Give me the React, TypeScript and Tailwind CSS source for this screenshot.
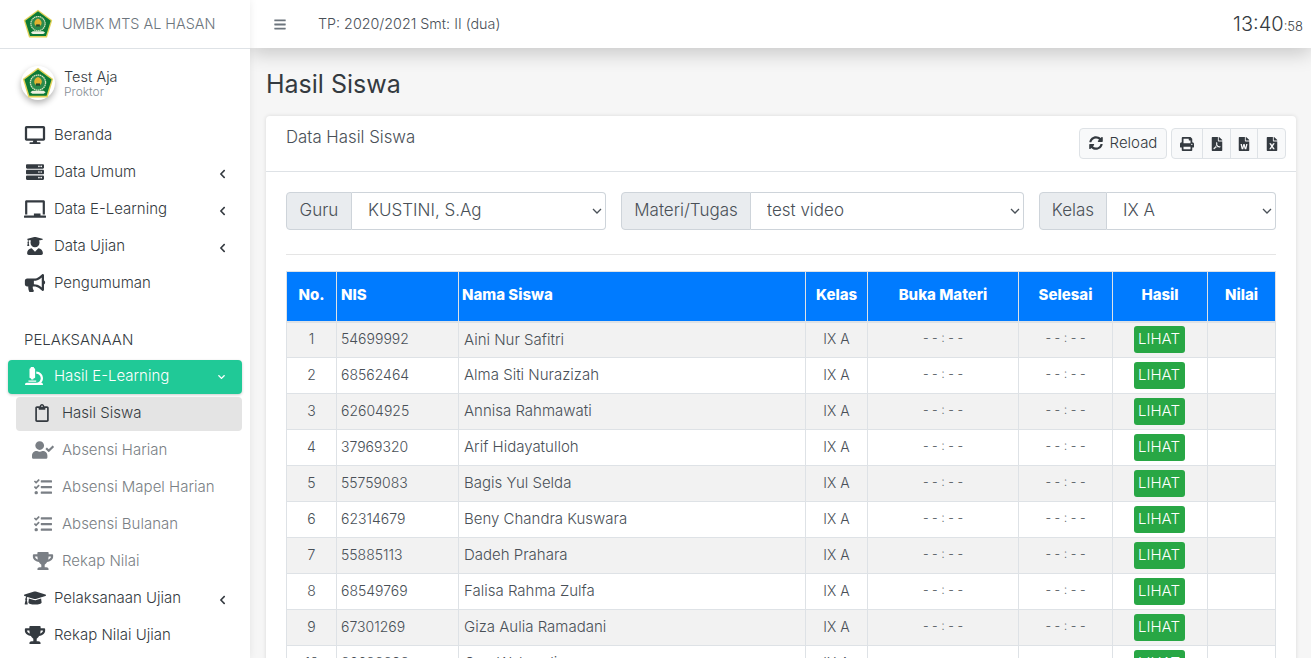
import React from "react"
import {
  FaBars, FaBullhorn, FaChalkboard, FaChevronDown, FaChevronLeft, FaDesktop, FaFileExcel, FaFilePdf,
  FaFileWord, FaGraduationCap, FaMicroscope, FaPrint, FaRegClipboard, FaServer, FaSyncAlt, FaTasks,
  FaTrophy, FaUserCheck, FaUserGraduate,
} from "react-icons/fa"

const students = [
  ["1", "54699992", "Aini Nur Safitri"],
  ["2", "68562464", "Alma Siti Nurazizah"],
  ["3", "62604925", "Annisa Rahmawati"],
  ["4", "37969320", "Arif Hidayatulloh"],
  ["5", "55759083", "Bagis Yul Selda"],
  ["6", "62314679", "Beny Chandra Kuswara"],
  ["7", "55885113", "Dadeh Prahara"],
  ["8", "68549769", "Falisa Rahma Zulfa"],
  ["9", "67301269", "Giza Aulia Ramadani"],
  ["10", "36628893", "Gun Wahyudi"],
]

function Logo({ className }: { className?: string }) {
  return (
    <svg viewBox="0 0 40 40" className={className}>
      <path d="M20 1 39 15 32 38H8L1 15Z" fill="#e3d35a" />
      <path d="M20 3 37 15.700 30.700 36H9.300L3 15.700Z" fill="#0c7a36" />
      <circle cx="20" cy="19.500" r="9.500" fill="#2c8a4c" stroke="#d5e3c0" strokeWidth="1.600" strokeDasharray="2 0.600" />
      <path d="M20 12.500c2.800 1 4.800 3.200 4.800 6 0 2.800-2.200 4.800-4.800 4.800s-4.800-2-4.800-4.800c0-2.800 2-5 4.800-6Z" fill="#e2b22f" />
      <path d="M17.500 20.500h5v3h-5Z" fill="#1d4a2c" />
      <path d="M10.500 31.500 13 29.600h14l2.500 1.900-2.500 1.900H13Z" fill="#eef0df" />
    </svg>
  )
}

function NavItem({ icon: Icon, label, caret }: { icon: any; label: string; caret?: boolean }) {
  return (
    <div className="flex h-[37px] items-center pl-6 pr-[24px] text-[#343a40]">
      <span className="flex w-[30px] -translate-y-px justify-start">
        <Icon className="h-[18px] w-[22px]" />
      </span>
      <span className="flex-1">{label}</span>
      {caret && <FaChevronLeft className="mt-[2px] h-[10px] w-[7px]" />}
    </div>
  )
}

function SubItem({ icon: Icon, label }: { icon: any; label: string }) {
  return (
    <div className="ml-4 flex h-[37px] w-[226px] items-center pl-4 text-[#7a7f85]">
      <span className="flex w-[30px] -translate-y-px justify-start">
        <Icon className="h-[18px] w-[22px]" />
      </span>
      <span>{label}</span>
    </div>
  )
}

function Sidebar() {
  return (
    <aside className="z-20 flex w-[250px] shrink-0 flex-col bg-white shadow-[0_0_8px_rgba(0,0,0,0.08)]">
      <div className="flex h-[49px] items-center border-b border-[#dee2e6] pl-[23px]">
        <Logo className="h-[30px] w-[30px]" />
        <span className="ml-[9px] text-[14.4px] text-[#6c757d]">UMBK MTS AL HASAN</span>
      </div>
      <div className="flex h-[68px] items-center pl-[21px]">
        <div className="flex h-[34px] w-[34px] items-center justify-center rounded-full bg-white shadow-[0_3px_6px_rgba(0,0,0,0.3)]">
          <Logo className="h-[32px] w-[32px]" />
        </div>
        <div className="ml-[9px] flex flex-col">
          <span className="pb-[1px] text-[14.500px] leading-[17px] text-[#343a40]">Test Aja</span>
          <span className="text-[12px] leading-[12px] text-[#868e96]">Proktor</span>
        </div>
      </div>
      <NavItem icon={FaDesktop} label="Beranda" />
      <NavItem icon={FaServer} label="Data Umum" caret />
      <NavItem icon={FaChalkboard} label="Data E-Learning" caret />
      <NavItem icon={FaUserGraduate} label="Data Ujian" caret />
      <NavItem icon={FaBullhorn} label="Pengumuman" />
      <div className="flex h-[58px] items-end pb-[9px] pl-6 text-[#343a40]">PELAKSANAAN</div>
      <div className="mx-2 flex h-[34px] items-center rounded bg-[#20c997] pl-4 pr-[15px] text-white shadow-[0_1px_3px_rgba(0,0,0,0.2)]">
        <span className="flex w-[30px] -translate-y-px justify-start">
          <FaMicroscope className="h-[18px] w-[20px]" />
        </span>
        <span className="flex-1 pb-[2px]">Hasil E-Learning</span>
        <FaChevronDown className="h-[8px] w-[11px]" />
      </div>
      <div className="ml-4 mt-[3px] flex h-[34px] w-[226px] items-center rounded bg-[#e4e4e4] pl-4 text-[#343a40]">
        <span className="flex w-[30px] -translate-y-px justify-start pl-[2px]">
          <FaRegClipboard className="h-[18px] w-[16px]" />
        </span>
        <span className="pb-[2px]">Hasil Siswa</span>
      </div>
      <div className="h-[1px]" />
      <SubItem icon={FaUserCheck} label="Absensi Harian" />
      <SubItem icon={FaTasks} label="Absensi Mapel Harian" />
      <SubItem icon={FaTasks} label="Absensi Bulanan" />
      <SubItem icon={FaTrophy} label="Rekap Nilai" />
      <NavItem icon={FaGraduationCap} label="Pelaksanaan Ujian" caret />
      <NavItem icon={FaTrophy} label="Rekap Nilai Ujian" />
    </aside>
  )
}

function SelectGroup({ label, value, width, labelWidth }: { label: string; value: string; width: string; labelWidth: string }) {
  return (
    <div className={`flex h-[38px] ${width}`}>
      <span className={`flex ${labelWidth} shrink-0 items-center justify-center rounded-l border border-[#ced4da] bg-[#e9ecef] pb-px text-[#495057]`}>
        {label}
      </span>
      <div className="relative min-w-0 flex-1">
        <select
          defaultValue={value}
          className="h-full w-full appearance-none rounded-r border border-l-0 border-[#ced4da] bg-white pb-px pl-4 text-[#495057]"
        >
          <option>{value}</option>
        </select>
        <svg viewBox="0 0 10 6" className="pointer-events-none absolute right-[4px] top-[16px] h-[6px] w-[10px]">
          <path d="M1 1l4 4 4-4" fill="none" stroke="#495057" strokeWidth="1.300" />
        </svg>
      </div>
    </div>
  )
}

function Results() {
  const th = "border border-b-2 border-[#dee2e6] pb-[2px] text-[15px] font-extrabold text-white"
  const td = "border border-[#dee2e6] px-[4px]"
  return (
    <table className="w-[989px] table-fixed border-collapse text-[14px] text-[#495057]">
      <colgroup>
        <col className="w-[50px]" />
        <col className="w-[122px]" />
        <col className="w-[347px]" />
        <col className="w-[62px]" />
        <col className="w-[151px]" />
        <col className="w-[94px]" />
        <col className="w-[95px]" />
        <col className="w-[68px]" />
      </colgroup>
      <thead>
        <tr className="h-[50px] bg-[#007bff]">
          <th className={th}>No.</th>
          <th className={`${th} px-[4px] text-left`}>NIS</th>
          <th className={`${th} pl-[3px] text-left`}>Nama Siswa</th>
          <th className={th}>Kelas</th>
          <th className={th}>Buka Materi</th>
          <th className={th}>Selesai</th>
          <th className={th}>Hasil</th>
          <th className={th}>Nilai</th>
        </tr>
      </thead>
      <tbody>
        {students.map((s, i) => (
          <tr key={s[0]} className={`h-[36px] ${i % 2 === 0 ? "bg-[#f2f2f2]" : "bg-white"}`}>
            <td className={`${td} pb-[2px] text-center`}>{s[0]}</td>
            <td className={`${td} pb-[2px]`}>{s[1]}</td>
            <td className={`${td} pl-[5px] text-[15px]`}>{s[2]}</td>
            <td className={`${td} pb-[2px] text-center`}>IX A</td>
            <td className={`${td} pb-[2px] text-center text-[12.500px]`}>- - : - -</td>
            <td className={`${td} pb-[2px] text-center text-[12.500px]`}>- - : - -</td>
            <td className={`${td} pr-[6px] text-center`}>
              <span className="inline-block h-[27px] w-[51px] rounded-[3px] bg-[#28a745] text-center text-[15px] leading-[25px] text-white">LIHAT</span>
            </td>
            <td className={td}></td>
          </tr>
        ))}
      </tbody>
    </table>
  )
}

export default function App() {
  return (
    <div className="flex h-screen overflow-hidden bg-[#f6f6f6] font-['Inter','Liberation_Sans',sans-serif] text-[15px] font-light">
      <Sidebar />
      <div className="flex min-w-0 flex-1 flex-col">
        <header className="z-10 flex h-[48px] shrink-0 items-center bg-white pl-[24px] pr-[8px] text-[#495057] shadow-[0_5px_20px_rgba(0,0,0,0.2)]">
          <FaBars className="h-[13px] w-[12px] text-[#6c757d]" />
          <span className="ml-[32px] flex-1 text-[14.300px]">TP: 2020/2021 Smt: II (dua)</span>
          <span className="text-[20px] text-[#343a40]">13:40<span className="text-[13px]">:58</span></span>
        </header>
        <main className="min-h-0 flex-1 pl-4 pr-[15px]">
          <h1 className="flex h-[68px] items-center pt-[6px] text-[25px] font-normal text-[#343a40]">Hasil Siswa</h1>
          <section className="rounded bg-white shadow-[0_0_4px_rgba(0,0,0,0.12)]">
            <div className="flex h-[56px] items-start justify-between border-b border-[#dee2e6] pl-5 pr-[10px] pt-3">
              <span className="mt-[-3px] text-[16.800px] text-[#495057]">Data Hasil Siswa</span>
              <div className="flex gap-1 text-[#343a40]">
                <button className="flex h-[31px] w-[88px] items-center justify-center gap-[7px] rounded border border-[#dee2e6] bg-[#f8f9fa] pb-px text-[15px]">
                  <FaSyncAlt className="h-[14px] w-[14px]" />
                  Reload
                </button>
                <div className="flex h-[31px] w-[115px] rounded border border-[#dee2e6] bg-[#f8f9fa]">
                  <span className="flex w-[31px] items-center justify-center border-r border-[#dee2e6]"><FaPrint className="h-[14px] w-[14px]" /></span>
                  <span className="flex w-[28px] items-center justify-center border-r border-[#dee2e6]"><FaFilePdf className="h-[14px] w-[12px]" /></span>
                  <span className="flex w-[27px] items-center justify-center border-r border-[#dee2e6]"><FaFileWord className="h-[14px] w-[12px]" /></span>
                  <span className="flex flex-1 items-center justify-center"><FaFileExcel className="h-[14px] w-[12px]" /></span>
                </div>
              </div>
            </div>
            <div className="px-5 pt-5 text-[17px]">
              <div className="flex gap-[15px]">
                <SelectGroup label="Guru" value="KUSTINI, S.Ag" width="w-[320px]" labelWidth="w-[66px]" />
                <SelectGroup label="Materi/Tugas" value="test video" width="w-[403px]" labelWidth="w-[130px]" />
                <SelectGroup label="Kelas" value="IX A" width="w-[237px]" labelWidth="w-[68px]" />
              </div>
              <hr className="mb-[16px] mt-6 border-[#e5e5e5]" />
              <Results />
            </div>
          </section>
        </main>
      </div>
    </div>
  )
}
